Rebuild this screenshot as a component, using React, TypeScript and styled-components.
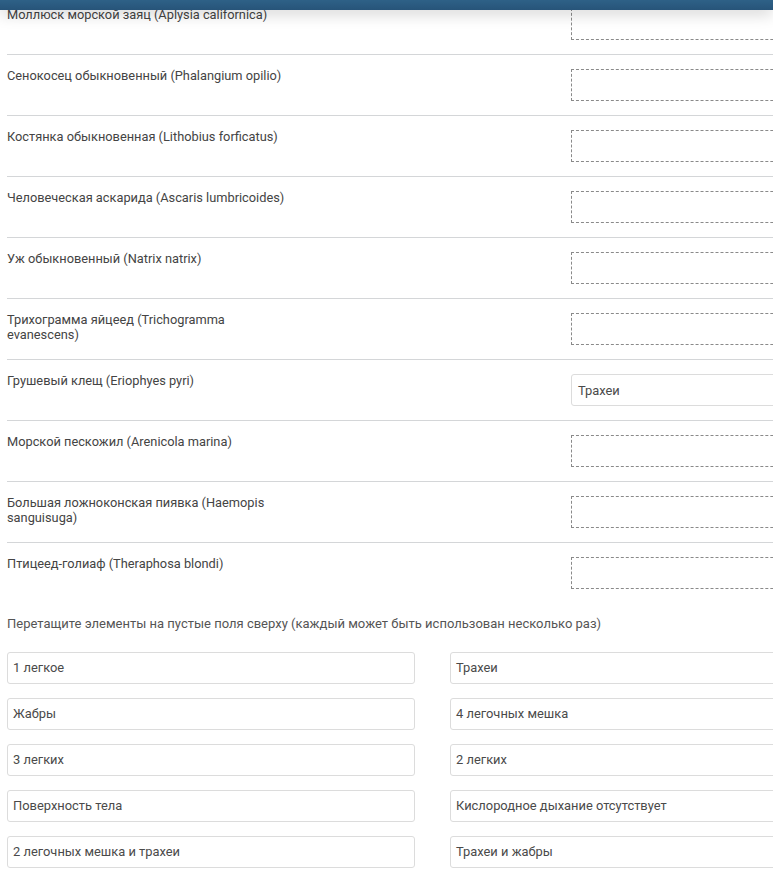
import React from 'react';
import styled, { createGlobalStyle } from 'styled-components';

const GlobalStyle = createGlobalStyle`
  html, body {
    margin: 0;
    padding: 0;
    overflow: hidden;
    background: #fff;
  }
  body {
    font-family: Roboto, "Liberation Sans", Arial, sans-serif;
    font-size: 12.8px;
    color: #444;
  }
`;

const TopBar = styled.header`
  position: fixed;
  top: 0;
  left: 0;
  right: 0;
  height: 10px;
  background: linear-gradient(180deg, #2e6187, #275479);
  box-shadow: 0 3px 16px rgba(0, 0, 0, 0.22);
  z-index: 10;
`;

const Page = styled.main`
  width: 851px;
  padding: 0 7px;
  margin-top: -6px;
`;

const QuestionList = styled.div`
  display: flex;
  flex-direction: column;
`;

const Row = styled.div<{ $last?: boolean }>`
  display: grid;
  grid-template-columns: 285px 1fr 287px;
  padding: 14px 0;
  border-bottom: ${p => (p.$last ? 'none' : '1px solid #d4d6d8')};
`;

const Label = styled.div`
  margin-top: -1px;
  line-height: 15px;
  color: #444;
`;

const DropZone = styled.div<{ $filled?: boolean }>`
  grid-column: 3;
  height: 32px;
  box-sizing: border-box;
  border: ${p => (p.$filled ? '1px solid #dcdcdc' : '1px dashed #8a8a8a')};
  border-radius: ${p => (p.$filled ? '3px' : '0')};
  display: flex;
  align-items: center;
  padding: 0 6px;
  font-size: 12.9px;
  color: #4a4a4a;
`;

const Hint = styled.p`
  margin: 13px 0 0;
  font-size: 13px;
  line-height: 15px;
  color: #555;
`;

const ItemGrid = styled.div`
  display: grid;
  grid-template-columns: 1fr 1fr;
  column-gap: 35px;
  row-gap: 14px;
  margin-top: 21px;
`;

const Item = styled.div`
  height: 32px;
  box-sizing: border-box;
  border: 1px solid #dcdcdc;
  border-radius: 3px;
  display: flex;
  align-items: center;
  padding: 0 5px 1px;
  font-size: 12.9px;
  color: #4a4a4a;
  background: #fff;
`;

const questions: { label: string; answer?: string }[] = [
  { label: 'Моллюск морской заяц (Aplysia californica)' },
  { label: 'Сенокосец обыкновенный (Phalangium opilio)' },
  { label: 'Костянка обыкновенная (Lithobius forficatus)' },
  { label: 'Человеческая аскарида (Ascaris lumbricoides)' },
  { label: 'Уж обыкновенный (Natrix natrix)' },
  { label: 'Трихограмма яйцеед (Trichogramma evanescens)' },
  { label: 'Грушевый клещ (Eriophyes pyri)', answer: 'Трахеи' },
  { label: 'Морской пескожил (Arenicola marina)' },
  { label: 'Большая ложноконская пиявка (Haemopis sanguisuga)' },
  { label: 'Птицеед-голиаф (Theraphosa blondi)' },
];

const options = [
  '1 легкое',
  'Трахеи',
  'Жабры',
  '4 легочных мешка',
  '3 легких',
  '2 легких',
  'Поверхность тела',
  'Кислородное дыхание отсутствует',
  '2 легочных мешка и трахеи',
  'Трахеи и жабры',
];

export default function App() {
  return (
    <>
      <GlobalStyle />
      <TopBar />
      <Page>
        <QuestionList>
          {questions.map((q, i) => (
            <Row key={q.label} $last={i === questions.length - 1}>
              <Label>{q.label}</Label>
              <DropZone $filled={!!q.answer}>{q.answer}</DropZone>
            </Row>
          ))}
        </QuestionList>
        <Hint>Перетащите элементы на пустые поля сверху (каждый может быть использован несколько раз)</Hint>
        <ItemGrid>
          {options.map(o => (
            <Item key={o}>{o}</Item>
          ))}
        </ItemGrid>
      </Page>
    </>
  );
}
